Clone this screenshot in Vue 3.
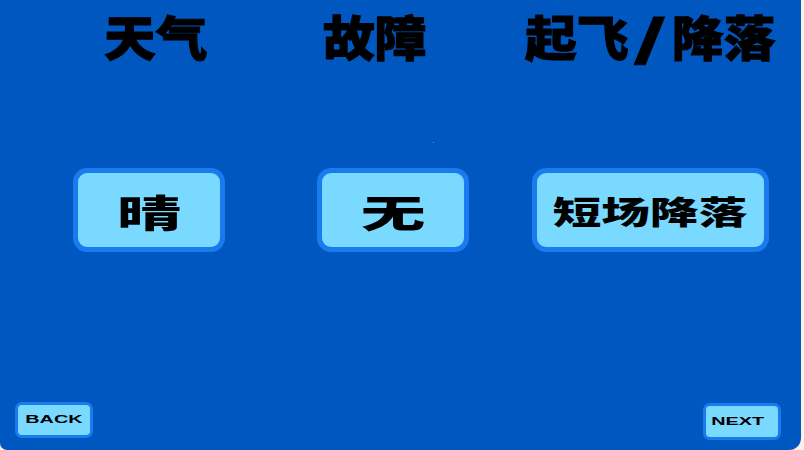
<script setup>
const titles = [
  { text: '天气', cls: 'title-weather' },
  { text: '故障', cls: 'title-fault' },
  { text: '起飞', cls: 'title-phase', slash: '降落' },
];
const options = [
  { text: '晴', cls: 'opt-short' },
  { text: '无', cls: 'opt-short' },
  { text: '短场降落', cls: 'opt-long' },
];
</script>

<template>
  <div class="screen">
    <div class="titles">
      <div v-for="t in titles" :key="t.text" class="title" :class="t.cls">
        {{ t.text }}<span v-if="t.slash" class="slash">/</span>{{ t.slash }}
      </div>
    </div>

    <div class="options">
      <button v-for="o in options" :key="o.text" class="option" :class="o.cls">
        <span>{{ o.text }}</span>
      </button>
    </div>

    <div class="nav">
      <button class="nav-btn nav-back"><span>BACK</span></button>
      <button class="nav-btn nav-next"><span>NEXT</span></button>
    </div>
    <i class="speck"></i>
  </div>
</template>

<style scoped>
.screen {
  position: relative;
  width: 801px;
  height: 450px;
  background: #0057c0;
  border-bottom-left-radius: 7px;
  border-bottom-right-radius: 12px;
  display: flex;
  flex-direction: column;
  font-family: "Noto Sans CJK SC", sans-serif;
  color: #000;
  overflow: hidden;
}
.titles {
  height: 168px;
  display: flex;
  padding-left: 104px;
  flex-shrink: 0;
}
.title {
  font-size: 48px;
  font-weight: 900;
  line-height: 70px;
  white-space: nowrap;
  -webkit-text-stroke: 1px #000;
  transform: scaleX(1.08);
  transform-origin: left center;
}
.title-weather {
  width: 219px;
}
.title-fault {
  width: 202px;
}
.slash {
  display: inline-block;
  width: 40px;
  text-align: center;
  transform: scaleX(1.7);
}
.options {
  display: flex;
  padding-left: 73px;
  flex-shrink: 0;
}
.option {
  height: 84px;
  box-sizing: border-box;
  border: 5px solid #1a7bef;
  border-radius: 14px;
  background: #79d9ff;
  padding: 0;
  color: #000;
  font-family: inherit;
  font-weight: 900;
  display: flex;
  align-items: center;
  justify-content: center;
}
.option span {
  display: block;
  white-space: nowrap;
}
.opt-short {
  width: 152px;
  margin-right: 92px;
  font-size: 38px;
}
.opt-short span {
  transform: scaleX(1.7);
}
.opt-short:nth-child(2) {
  margin-right: 63px;
}
.opt-long {
  width: 237px;
  font-size: 32px;
}
.opt-long span {
  transform: scaleX(1.52);
}
.nav {
  margin-top: auto;
  display: flex;
  justify-content: space-between;
  align-items: flex-end;
  padding: 0 20px 10px 15px;
}
.nav-btn {
  width: 78px;
  height: 37px;
  box-sizing: border-box;
  border: 3px solid #1a7bef;
  border-radius: 7px;
  background: #79d9ff;
  padding: 0 0 2px;
  color: #000;
  font-family: "Liberation Sans", sans-serif;
  font-size: 11px;
  font-weight: bold;
  display: flex;
  align-items: center;
  justify-content: center;
}
.nav-back {
  height: 36px;
  margin-bottom: 2px;
  padding-bottom: 3px;
}
.nav-next {
  padding-right: 8px;
}
.nav-btn span {
  display: block;
  transform: scaleX(1.8);
}
.speck {
  position: absolute;
  left: 433px;
  top: 142px;
  width: 1px;
  height: 1px;
  background: #5f9ae0;
}
</style>

<style>
html,
body {
  background: #ffefe6;
}
</style>
